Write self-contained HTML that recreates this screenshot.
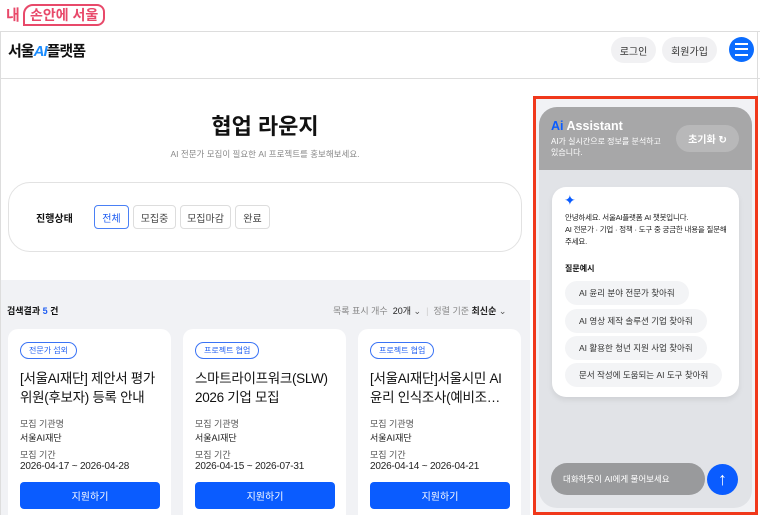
<!DOCTYPE html>
<html><head><meta charset="utf-8"><style>
*{box-sizing:border-box;margin:0;padding:0}
body{width:760px;height:515px;overflow:hidden;background:#fff;font-family:"Liberation Sans","Noto Sans CJK KR",sans-serif;position:relative;color:#111}
.a{position:absolute}
.pill{position:absolute;border-radius:14px;background:#f1f1f3;font-size:10px;color:#333;display:flex;align-items:center;justify-content:center}
.fb{position:absolute;top:205px;height:24px;border:1px solid #ddd;border-radius:4px;font-size:10px;color:#444;display:flex;align-items:center;justify-content:center;background:#fff}
.card{position:absolute;top:329px;width:163px;height:200px;background:#fff;border-radius:10px}
.tag{position:absolute;left:12px;top:13px;height:17px;border:1px solid #3a73f5;border-radius:9px;font-size:8px;color:#1f5ef2;padding:0 8px;display:flex;align-items:center}
.tt{position:absolute;left:12px;top:40px;width:140px;font-size:13.5px;line-height:19px;color:#111;letter-spacing:-0.3px}
.tt div{white-space:nowrap;overflow:hidden;text-overflow:ellipsis}
.lb{position:absolute;left:12px;font-size:9px;color:#555}
.vl{position:absolute;left:12px;font-size:9px;color:#222}
.dt{position:absolute;left:12px;font-size:10px;color:#222;letter-spacing:-0.2px}
.btn{position:absolute;left:12px;top:153px;width:140px;height:27px;background:#0a5cff;border-radius:4px;color:#fff;font-size:10px;display:flex;align-items:center;justify-content:center}
.q{position:absolute;left:565px;height:24px;border-radius:12px;background:#f3f4f6;font-size:8.5px;color:#333;padding:0 14px;display:flex;align-items:center}
</style></head><body>
<div class="a" style="left:6px;top:4px;font-size:15px;color:#e8496a;font-weight:bold">내</div>
<div class="a" style="left:23px;top:4px;width:82px;height:22px;border:2px solid #e8496a;border-top-left-radius:10px;border-top-right-radius:8px;border-bottom-right-radius:8px;font-size:14px;color:#e8496a;font-weight:bold;padding-left:5px;line-height:19px">손안에 서울</div>
<div class="a" style="left:0;top:31px;width:760px;height:1px;background:#ddd"></div>
<div class="a" style="left:0;top:78px;width:760px;height:1px;background:#ddd"></div>
<div class="a" style="left:0;top:31px;width:1px;height:484px;background:#ddd"></div>
<div class="a" style="left:757px;top:31px;width:1px;height:484px;background:#ddd"></div>
<div class="a" style="left:8px;top:40px;font-size:15px;font-weight:bold;letter-spacing:-1px">서울<span style="color:#1a8cff;font-style:italic">AI</span>플랫폼</div>
<div class="pill" style="left:611px;top:37px;width:45px;height:26px;border-radius:13px">로그인</div>
<div class="pill" style="left:662px;top:37px;width:55px;height:26px;border-radius:13px">회원가입</div>
<div class="a" style="left:729px;top:37px;width:25px;height:25px;border-radius:50%;background:#0a6cff"></div>
<div class="a" style="left:735px;top:43px;width:13px;height:2px;background:#fff;box-shadow:0 5px 0 #fff,0 11px 0 #fff"></div>

<div class="a" style="left:0;top:109px;width:530px;text-align:center;font-size:22px;font-weight:bold">협업 라운지</div>
<div class="a" style="left:0;top:148px;width:530px;text-align:center;font-size:8.5px;color:#888">AI 전문가 모집이 필요한 AI 프로젝트를 홍보해보세요.</div>
<div class="a" style="left:8px;top:182px;width:514px;height:70px;border:1px solid #e2e2e2;border-radius:22px"></div>
<div class="a" style="left:36px;top:210px;font-size:10px;font-weight:bold">진행상태</div>
<div class="fb" style="left:94px;width:35px;border-color:#4a80f5;color:#1f5ef2">전체</div>
<div class="fb" style="left:133px;width:43px">모집중</div>
<div class="fb" style="left:180px;width:51px">모집마감</div>
<div class="fb" style="left:235px;width:35px">완료</div>

<div class="a" style="left:1px;top:280px;width:529px;height:235px;background:#f1f2f5"></div>
<div class="a" style="left:7px;top:304px;font-size:9px;font-weight:bold">검색결과 <span style="color:#1f5ef2">5</span> 건</div>
<div class="a" style="left:333px;top:304px;font-size:9px;color:#888">목록 표시 개수 <b style="color:#222;font-weight:normal">&nbsp;20개</b> <span style="color:#555">⌄</span> <span style="color:#ccc">&nbsp;|&nbsp;</span> 정렬 기준 <b style="color:#222">최신순</b> <span style="color:#555">⌄</span></div>

<div class="card" style="left:8px"><div class="tag">전문가 섭외</div><div class="tt"><div>[서울AI재단] 제안서 평가</div><div>위원(후보자) 등록 안내</div></div><div class="lb" style="top:88px">모집 기관명</div><div class="vl" style="top:102px">서울AI재단</div><div class="lb" style="top:119px">모집 기간</div><div class="dt" style="top:132px">2026-04-17 ~ 2026-04-28</div><div class="btn">지원하기</div></div>
<div class="card" style="left:183px"><div class="tag">프로젝트 협업</div><div class="tt"><div>스마트라이프워크(SLW)</div><div>2026 기업 모집</div></div><div class="lb" style="top:88px">모집 기관명</div><div class="vl" style="top:102px">서울AI재단</div><div class="lb" style="top:119px">모집 기간</div><div class="dt" style="top:132px">2026-04-15 ~ 2026-07-31</div><div class="btn">지원하기</div></div>
<div class="card" style="left:358px"><div class="tag">프로젝트 협업</div><div class="tt"><div>[서울AI재단]서울시민 AI</div><div>윤리 인식조사(예비조사)…</div></div><div class="lb" style="top:88px">모집 기관명</div><div class="vl" style="top:102px">서울AI재단</div><div class="lb" style="top:119px">모집 기간</div><div class="dt" style="top:132px">2026-04-14 ~ 2026-04-21</div><div class="btn">지원하기</div></div>

<div class="a" style="left:533px;top:96px;width:225px;height:419px;background:#f1f2f5;border:3px solid #f0381b"></div>
<div class="a" style="left:539px;top:107px;width:213px;height:401px;background:#e1e3e7;border-radius:18px;overflow:hidden">
 <div style="height:63px;background:#a7a7a8"></div>
</div>
<div class="a" style="left:551px;top:119px;font-size:12.5px;color:#fff;font-weight:bold"><span style="color:#0a5cff">Ai</span> Assistant</div>
<div class="a" style="left:551px;top:136px;font-size:8px;color:#fff;line-height:11px">AI가 실시간으로 정보를 분석하고<br>있습니다.</div>
<div class="a" style="left:676px;top:125px;width:63px;height:27px;border-radius:14px;background:#b8b8b9;color:#fff;font-size:10px;font-weight:bold;display:flex;align-items:center;justify-content:center">초기화 ↻</div>
<div class="a" style="left:552px;top:187px;width:187px;height:210px;background:#fff;border-radius:14px;box-shadow:0 3px 6px rgba(0,0,0,.08)"></div>
<div class="a" style="left:564px;top:192px;font-size:14px;color:#0a5cff">✦</div>
<div class="a" style="left:565px;top:212px;font-size:7.5px;line-height:12px;color:#222;letter-spacing:-0.2px;white-space:nowrap">안녕하세요. 서울AI플랫폼 AI 챗봇입니다.<br>AI 전문가 · 기업 · 정책 · 도구 중 궁금한 내용을 질문해<br>주세요.</div>
<div class="a" style="left:565px;top:263px;font-size:8px;font-weight:bold">질문예시</div>
<div class="q" style="top:281px">AI 윤리 분야 전문가 찾아줘</div>
<div class="q" style="top:309px">AI 영상 제작 솔루션 기업 찾아줘</div>
<div class="q" style="top:336px">AI 활용한 청년 지원 사업 찾아줘</div>
<div class="q" style="top:363px">문서 작성에 도움되는 AI 도구 찾아줘</div>
<div class="a" style="left:551px;top:463px;width:154px;height:32px;border-radius:16px;background:#999a9c;color:#fff;font-size:8.5px;padding-left:12px;display:flex;align-items:center">대화하듯이 AI에게 물어보세요</div>
<div class="a" style="left:707px;top:464px;width:31px;height:31px;border-radius:50%;background:#0a5cff;color:#fff;font-size:18px;display:flex;align-items:center;justify-content:center">↑</div>
</body></html>
